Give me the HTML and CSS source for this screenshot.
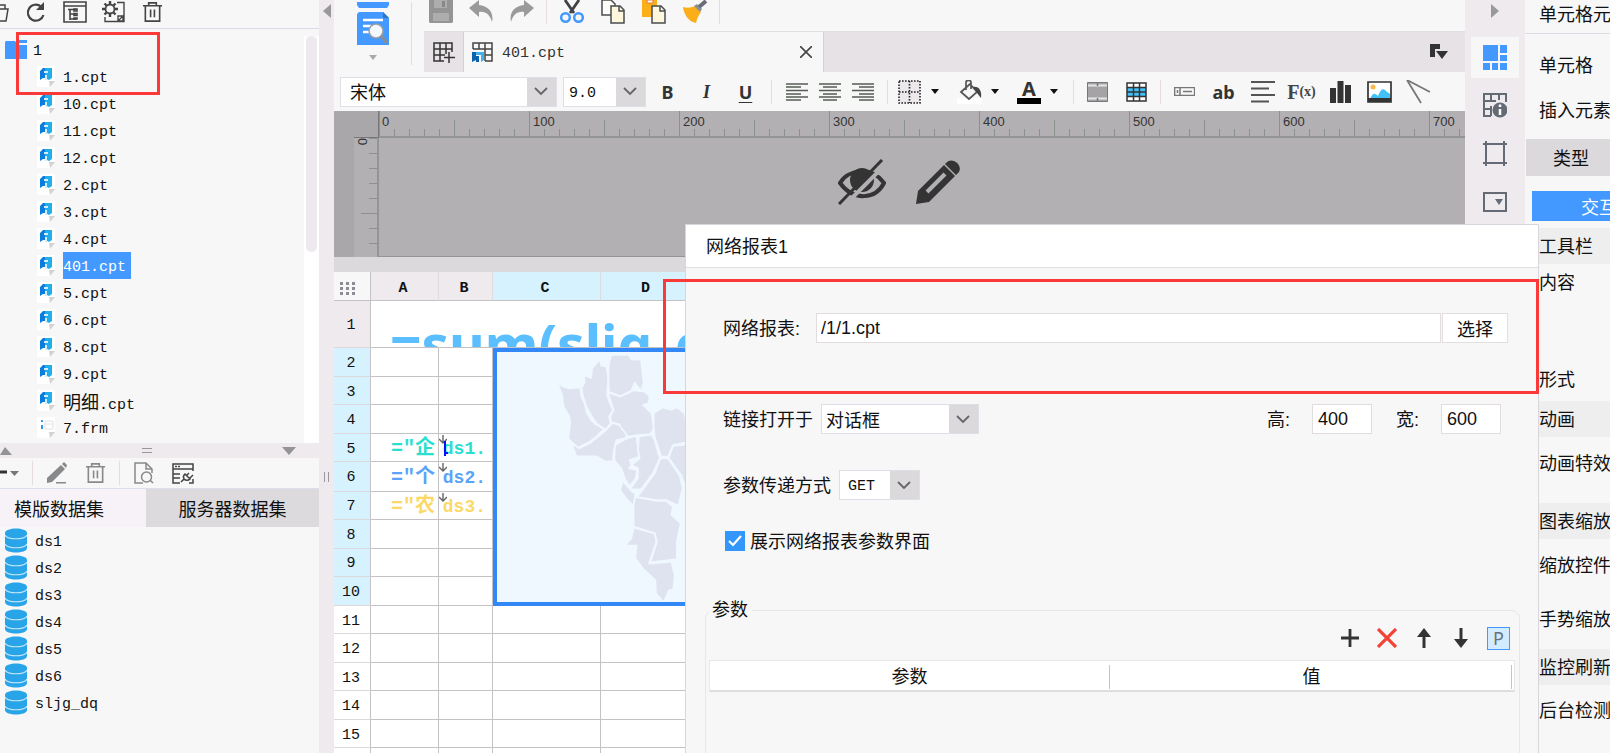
FILE: index.html
```html
<!DOCTYPE html>
<html lang="zh-CN">
<head>
<meta charset="utf-8">
<title>401.cpt</title>
<link rel="stylesheet" href="styles.css">
</head>
<body>
<svg class="defs" aria-hidden="true">
  <symbol id="file" viewBox="0 0 19 21"><path d="M0 0h18v14l-5 7H0z" fill="#fff"/><path d="M12 15h6l-5 6z" fill="#d2d2d2"/><path d="M3 5l3-3h3v10H6l-3 2z" fill="#0a7ddc"/><path d="M8 2h7v10l-3 2-4-2z" fill="#23aeea"/><path d="M7 5h4v2H7zM8 9h2v5H8z" fill="#d4edfa"/></symbol>
  <symbol id="form" viewBox="0 0 19 21"><path d="M0 0h18v14l-5 7H0z" fill="#fff"/><path d="M12 15h6l-5 6z" fill="#d2d2d2"/><path d="M8 4h8v8H8zM8 7h8" fill="none" stroke="#e6e0e4"/><path d="M4 3h2v2H4zM4 8h2v4H4z" fill="#2b9fe8"/></symbol>
  <symbol id="db" viewBox="0 0 22 25"><path d="M0 5C0-1 22-1 22 5v15c0 6-22 6-22 0z" fill="#28a4e9"/><path d="M0 7c2 5 20 5 22 0M0 16c2 5 20 5 22 0" fill="none" stroke="#c5e6f9" stroke-width="1.200"/></symbol>
  <symbol id="trash" viewBox="0 0 22 22"><path d="M1 4.500h20M7 4V1.500h8V4M3.500 4.500v16h15v-16M9 8.500v8M13 8.500v8" fill="none" stroke="currentColor" stroke-width="1.700"/></symbol>
  <symbol id="chev" viewBox="0 0 14 9"><path d="M1 1l6 6 6-6" fill="none" stroke="#66666a" stroke-width="1.800"/></symbol>
  <symbol id="tri" viewBox="0 0 8 5"><path d="M0 0h8L4 5z" fill="currentColor"/></symbol>
  <symbol id="into" viewBox="0 0 8 9"><path d="M4 0v8M0 4l4 4 4-4" fill="none" stroke="#666" stroke-width="1.400"/></symbol>
</svg>

<div class="app">
  <aside class="left">
    <div class="bar files-bar">
      <button class="tool cut" aria-label="打开"><svg width="9" height="22" viewBox="0 0 9 22"><path d="M0 4h5v4M0 8h8l-2 12H0" fill="none" stroke="#444" stroke-width="1.500"/></svg></button>
      <button class="tool" aria-label="刷新"><svg width="21" height="22" viewBox="0 0 21 22"><path d="M16 5.500A8 8 0 1 0 18.500 14" fill="none" stroke="#444" stroke-width="2.200"/><path d="M19 1v8h-8z" fill="#444"/></svg></button>
      <button class="tool" aria-label="目录"><svg width="24" height="22" viewBox="0 0 24 22" fill="none" stroke="#444" stroke-width="1.600"><path d="M1 1h22v20H1zM1 5h22M5 8.500h8M7 9v10M7 13h6M7 18h6"/><path d="M11 8h3v2h-3zM11 12.500h3v2h-3zM11 17h3v1h-3z"/></svg></button>
      <button class="tool" aria-label="设置"><svg width="23" height="22" viewBox="0 0 23 22" fill="none" stroke="#444" stroke-width="1.800"><circle cx="8" cy="8" r="4.500"/><path d="M8 0v3M8 13v3M0 8h3M13 8h3M2.500 2.500l2 2M11.500 11.500l2 2M13.500 2.500l-2 2M4.500 11.500l-2 2" stroke-width="2.400"/><path d="M15 1.500h7v19H3V16M16 20l6-6M16 15h5v5h-5z" stroke-width="1.400"/></svg></button>
      <button class="tool dark" aria-label="删除"><svg width="21" height="22"><use href="#trash"/></svg></button>
    </div>
    <div class="tree-pane">
      <ul class="tree">
        <li class="root"><svg width="22" height="19" viewBox="0 0 22 19"><path d="M1 1h9l3 4h9v14H0V2z" fill="#4399ff"/><path d="M12 0h10v3h-8z" fill="#4399ff"/></svg><span>1</span></li>
        <li><svg><use href="#file"/></svg><span>1.cpt</span></li>
        <li><svg><use href="#file"/></svg><span>10.cpt</span></li>
        <li><svg><use href="#file"/></svg><span>11.cpt</span></li>
        <li><svg><use href="#file"/></svg><span>12.cpt</span></li>
        <li><svg><use href="#file"/></svg><span>2.cpt</span></li>
        <li><svg><use href="#file"/></svg><span>3.cpt</span></li>
        <li><svg><use href="#file"/></svg><span>4.cpt</span></li>
        <li class="on"><svg><use href="#file"/></svg><span>401.cpt</span></li>
        <li><svg><use href="#file"/></svg><span>5.cpt</span></li>
        <li><svg><use href="#file"/></svg><span>6.cpt</span></li>
        <li><svg><use href="#file"/></svg><span>8.cpt</span></li>
        <li><svg><use href="#file"/></svg><span>9.cpt</span></li>
        <li><svg><use href="#file"/></svg><span><b class="cjk">明细</b>.cpt</span></li>
        <li><svg><use href="#form"/></svg><span>7.frm</span></li>
      </ul>
      <div class="scroll"><i></i></div>
      <div class="mark mark-file"></div>
    </div>
    <div class="splitter">
      <svg width="12" height="8" viewBox="0 0 12 8"><path d="M0 8h12L5 0z" fill="#949494"/></svg>
      <svg width="10" height="5" viewBox="0 0 10 5"><path d="M0 .5h10M0 4.500h10" stroke="#99979b"/></svg>
      <svg width="14" height="8" viewBox="0 0 14 8"><path d="M0 0h14L7 8z" fill="#949494"/></svg>
    </div>
    <div class="bar data-bar">
      <button class="tool add" aria-label="添加数据集"><svg width="20" height="8" viewBox="0 0 20 8"><path d="M0 3h7" stroke="#333" stroke-width="3"/><path d="M10 2h9l-4.500 5z" fill="#777"/></svg></button>
      <i class="sep"></i>
      <button class="tool grey" aria-label="编辑"><svg width="22" height="22" viewBox="0 0 22 22"><path d="M1 16L15 3l4 4L6 20l-5 1zM16 2l2-2 3 3-1 3zM10 20h10v1.500H10z" fill="currentColor"/></svg></button>
      <button class="tool grey" aria-label="删除数据集"><svg width="21" height="22"><use href="#trash"/></svg></button>
      <i class="sep"></i>
      <button class="tool grey" aria-label="预览数据"><svg width="20" height="22" viewBox="0 0 20 22" fill="none" stroke="currentColor" stroke-width="1.500"><path d="M9 21H1V1h11l6 6v4M12 1v6h6"/><circle cx="12.500" cy="15" r="5"/><path d="M16 18l3 3"/></svg></button>
      <button class="tool dark" aria-label="连接"><svg width="22" height="21" viewBox="0 0 22 21" fill="none" stroke="currentColor" stroke-width="1.500"><path d="M8 20H1V1h20v7M1 6h20M1 11h7M1 15h7M3 3.500h2M6 3.500h2"/><path d="M9 19l3-3a4 4 0 0 1 1-5l5 5a4 4 0 0 1-6 0M15 12l2-2M18 15l3-3M17 20h4v-4" /></svg></button>
    </div>
    <div class="tabs">
      <button class="tab on">模版数据集</button><button class="tab">服务器数据集</button>
    </div>
    <ul class="sets">
      <li><svg><use href="#db"/></svg><span>ds1</span></li>
      <li><svg><use href="#db"/></svg><span>ds2</span></li>
      <li><svg><use href="#db"/></svg><span>ds3</span></li>
      <li><svg><use href="#db"/></svg><span>ds4</span></li>
      <li><svg><use href="#db"/></svg><span>ds5</span></li>
      <li><svg><use href="#db"/></svg><span>ds6</span></li>
      <li><svg><use href="#db"/></svg><span>sljg_dq</span></li>
    </ul>
  </aside>

  <div class="gutter">
    <svg width="8" height="14" viewBox="0 0 8 14"><path d="M8 0v14L0 7z" fill="#99999b"/></svg>
    <svg width="5" height="10" viewBox="0 0 5 10"><path d="M.5 0v10M4.500 0v10" stroke="#99979b"/></svg>
  </div>

  <main class="center">
    <div class="top">
      <button class="preview" aria-label="预览">
        <svg width="32" height="43" viewBox="0 0 32 43"><path d="M0 0h32v3l-2 3H2L0 3z" fill="#4399ff"/><path d="M2 10h24l6 6v27H0V12z" fill="#4399ff"/><path d="M26 10l6 6h-6z" fill="#2d74c4"/><path d="M6 18h20M6 24h8M6 30h8" stroke="#fff" stroke-width="2.500"/><circle cx="19" cy="29" r="7" fill="#f2f8ff" stroke="#9a9da2" stroke-width="1.500"/><path d="M24 34l6 7" stroke="#8a8d92" stroke-width="3"/></svg>
        <svg width="8" height="5"><use href="#tri"/></svg>
      </button>
      <div class="top-main">
        <div class="quick">
          <button class="tool" aria-label="保存"><svg width="24" height="24" viewBox="0 0 24 24"><path d="M0 0h24v22l-1 1H1l-1-1z" fill="#949494"/><path d="M5 0h13v8H5zM4 13h16v8H4z" fill="#adadad"/><path d="M13 1h3v6h-3z" fill="#888"/></svg></button>
          <button class="tool" aria-label="撤销"><svg width="24" height="24" viewBox="0 0 24 24"><path d="M10 0L0 8l10 9v-5c7-1 11 3 13 10 2-9-3-16-13-17z" fill="#9a9a9a"/></svg></button>
          <button class="tool" aria-label="重做"><svg width="24" height="24" viewBox="0 0 24 24"><path d="M14 0l10 8-10 9v-5C7 11 3 15 1 22-1 13 4 6 14 5z" fill="#9a9a9a"/></svg></button>
          <i class="sep"></i>
          <button class="tool" aria-label="剪切"><svg width="24" height="24" viewBox="0 0 24 24" fill="none"><path d="M5 0l9 13M19 0l-9 13" stroke="#3e4145" stroke-width="2.800"/><circle cx="5.500" cy="17.500" r="4.300" stroke="#4399ff" stroke-width="2.500"/><circle cx="18.500" cy="17.500" r="4.300" stroke="#4399ff" stroke-width="2.500"/></svg></button>
          <button class="tool" aria-label="复制"><svg width="24" height="24" viewBox="0 0 24 24" stroke="#494d52" stroke-width="1.500"><path d="M1 0h9l4 4v11H1z" fill="#fffdf8"/><path d="M10 6h9l4 4v13H10z" fill="#fff6de"/><path d="M18 6v5h5" fill="none"/></svg></button>
          <button class="tool" aria-label="粘贴"><svg width="24" height="24" viewBox="0 0 24 24"><path d="M0 0h15v17H0z" fill="#fbb018"/><path d="M5 0h6v3H5z" fill="#fff" stroke="#e9773c"/><path d="M10 6h9l4 4v13H10z" fill="#fff6de" stroke="#494d52" stroke-width="1.500"/><path d="M18 6v5h5" fill="none" stroke="#494d52" stroke-width="1.500"/></svg></button>
          <button class="tool" aria-label="格式刷"><svg width="24" height="24" viewBox="0 0 24 24"><path d="M0 7c4 1 8 1 12-1l6 6c-3 4-4 7-5 11C6 22 1 15 0 7z" fill="#fbae17"/><path d="M11 6l3-2 5 5-2 3z" fill="#8b8f97"/><path d="M16 7l7-6" stroke="#6a6e78" stroke-width="4"/></svg></button>
          <i class="sep"></i>
        </div>
        <div class="docs">
          <button class="newdoc" aria-label="新建"><svg width="22" height="21" viewBox="0 0 22 21" fill="none" stroke="#333" stroke-width="1.500"><path d="M11 19H1V1h18v9M1 7h18M1 13h11M7 1v18M13 1v11M16 10v11M11 15.500h11"/></svg></button>
          <div class="doc">
            <svg width="21" height="21" viewBox="0 0 21 21"><path d="M1 7V1h19v18h-7M1 7h19M13 13h7M7 1v6M13 1v18" fill="none" stroke="#444" stroke-width="1.500"/><path d="M0 10h4v4h3v6H4v-2l-4 2z" fill="#0c62ae"/><path d="M4 10h8v8l-3 2v-7H4z" fill="#41b1ee"/></svg>
            <span>401.cpt</span>
            <button class="close" aria-label="关闭"><svg width="12" height="12" viewBox="0 0 12 12"><path d="M0 0l12 12M12 0L0 12" stroke="#444" stroke-width="1.600"/></svg></button>
          </div>
          <button class="list" aria-label="文档列表"><svg width="18" height="16" viewBox="0 0 18 16"><path d="M0 0h10v5H5v8H0z" fill="#333"/><path d="M6 7h12l-6 8z" fill="#333"/></svg></button>
        </div>
      </div>
    </div>

    <div class="format">
      <div class="combo font"><select aria-label="字体"><option>宋体</option></select><svg><use href="#chev"/></svg></div>
      <div class="combo size"><select aria-label="字号"><option>9.0</option></select><svg><use href="#chev"/></svg></div>
      <button class="tool glyph">B</button>
      <button class="tool glyph it">I</button>
      <button class="tool glyph un">U</button>
      <i class="sep"></i>
      <button class="tool al" aria-label="左对齐"><svg width="22" height="18" viewBox="0 0 22 18"><path d="M0 1h22M0 4h15M0 7.500h22M0 11h15M0 14h22M0 17h15" stroke="#555c55" stroke-width="1.500"/></svg></button>
      <button class="tool al" aria-label="居中"><svg width="22" height="18" viewBox="0 0 22 18"><path d="M0 1h22M4 4h14M0 7.500h22M4 11h14M0 14h22M4 17h14" stroke="#555c55" stroke-width="1.500"/></svg></button>
      <button class="tool al" aria-label="右对齐"><svg width="22" height="18" viewBox="0 0 22 18"><path d="M0 1h22M7 4h15M0 7.500h22M7 11h15M0 14h22M7 17h15" stroke="#555c55" stroke-width="1.500"/></svg></button>
      <i class="sep wide"></i>
      <button class="tool split" aria-label="边框"><svg width="25" height="24" viewBox="0 0 25 24"><path d="M2 1h21v22H2zM12.500 1v22M2 12h21" fill="#ece8ec" stroke="#222" stroke-width="1.600" stroke-dasharray="1.600 1.400"/></svg><svg width="8" height="5"><use href="#tri"/></svg></button>
      <button class="tool split" aria-label="填充色"><svg width="25" height="24" viewBox="0 0 25 24"><path d="M0 18h25v6H0z" fill="#fff"/><path d="M4 12l9-8 7 8-8 7zM9 10V2c0-2 5-2 5 0v7" fill="none" stroke="#555" stroke-width="1.700"/><path d="M16 7c6-1 9 4 8 11l-4-5z" fill="#444"/></svg><svg width="8" height="5"><use href="#tri"/></svg></button>
      <button class="tool split" aria-label="字体颜色"><span class="fore">A</span><svg width="8" height="5"><use href="#tri"/></svg></button>
      <i class="sep"></i>
      <button class="tool" aria-label="合并"><svg width="21" height="20" viewBox="0 0 21 20"><path d="M.5 .5h20v19H.5z" fill="#a5a3a6" stroke="#777"/><path d="M1 3.500h19M1 16.500h19" stroke="#e5e5e5" stroke-width="2"/><path d="M10.500 0v4M10.500 16v4" stroke="#777" stroke-width="1.500"/></svg></button>
      <button class="tool" aria-label="取消合并"><svg width="21" height="20" viewBox="0 0 21 20"><path d="M1 1h19v18H1z" fill="#fff"/><path d="M1 6h19v8H1z" fill="#41c1f7"/><path d="M1 1h19v18H1zM1 5.500h19M1 10h19M1 14.500h19M7.500 1v18M13.500 1v18" fill="none" stroke="#333" stroke-width="1.500"/></svg></button>
      <i class="sep"></i>
      <button class="tool" aria-label="按钮控件"><svg width="21" height="9" viewBox="0 0 21 9" fill="none" stroke="#777" stroke-width="1.500"><path d="M.6 .6h20v7.800H.6zM6 .6v8M3.500 3v3M9 4.500h9"/></svg></button>
      <button class="tool glyph">ab</button>
      <button class="tool" aria-label="段落"><svg width="24" height="22" viewBox="0 0 24 22"><path d="M0 1h24M0 7.500h18M0 14h24M0 20.500h18" stroke="#555" stroke-width="2"/></svg></button>
      <button class="tool fx" aria-label="公式">F<small>(x)</small></button>
      <button class="tool" aria-label="图表"><svg width="21" height="22" viewBox="0 0 21 22"><path d="M0 7h6v15H0zM7.500 0h6v22h-6zM15 4h6v18h-6z" fill="#333"/></svg></button>
      <button class="tool" aria-label="图片"><svg width="25" height="22" viewBox="0 0 25 22"><path d="M1 1h23v20H1z" fill="#fff" stroke="#333" stroke-width="1.700"/><path d="M3 18c3-7 5-6 8-3 3-8 6-8 8-5l4 3v5z" fill="#41c1f7"/><path d="M1 17h23v4H1z" fill="#333"/><circle cx="6" cy="6" r="2.500" fill="#fbb94a"/></svg></button>
      <button class="tool" aria-label="斜线"><svg width="25" height="24" viewBox="0 0 25 24"><path d="M1 0l23 12M1 0l14 23" stroke="#777" stroke-width="1.800"/></svg></button>
    </div>

    <div class="stage">
      <div class="corner"></div>
      <div class="ruler-x"><span>0</span><span>100</span><span>200</span><span>300</span><span>400</span><span>500</span><span>600</span><span>700</span></div>
      <div class="ruler-y"><span>0</span></div>
      <div class="paper">
        <svg width="48" height="46" viewBox="0 0 48 46"><path d="M2 24C10 10 34 7 46 24C38 40 16 43 2 24z" fill="none" stroke="#343434" stroke-width="4"/><circle cx="24" cy="21" r="12" fill="#343434"/><path d="M5 48L49 4" stroke="#b2b0b3" stroke-width="4"/><path d="M1 45L44 1" stroke="#343434" stroke-width="3"/></svg>
        <svg width="46" height="46" viewBox="0 0 46 46"><path d="M1 45l2-13L29 6l11 11-26 26z" fill="#343434"/><path d="M31 4c6-7 17 2 13 9l-3 3L30 5z" fill="#343434"/><path d="M12 33l18-18" stroke="#b2b0b3" stroke-width="4"/></svg>
      </div>
    </div>

    <table class="grid">
      <colgroup><col class="c-h"><col class="c-a"><col class="c-b"><col class="c-c"><col class="c-d"><col></colgroup>
      <thead><tr><td class="all"><svg width="16" height="13" viewBox="0 0 16 13"><path d="M0 1.500h3M6 1.500h3M12 1.500h3M0 6.500h3M6 6.500h3M12 6.500h3M0 11.500h3M6 11.500h3M12 11.500h3" stroke="#8e8b96" stroke-width="3"/></svg></td><th>A</th><th>B</th><th class="on">C</th><th class="on">D</th><th class="on">E</th></tr></thead>
      <tbody>
        <tr class="r1"><th>1</th><td colspan="5"><div class="total">=sum(sljg_dq)</div></td></tr>
        <tr class="on r2"><th>2</th><td></td><td></td><td colspan="3" rowspan="9" class="map">
          <svg width="193" height="250" viewBox="502 31 579 750"><g fill="#dfe3ef" stroke="#eff7ff" stroke-width="5" stroke-linejoin="round">
            <path d="M683 120l17 15 20 5 32-3 3 28 10 20 7 30 13 20 12 12 26 15-23 23-20 15-35 18-20-18-9-10 6-50-4-18-16-27-5-35z"/>
            <path d="M810 53l5 19 15 3 6 35-4 50 11 30 7 15-12 20 5 20-15 19-28-19-13-20-17-30-8-25-7-30 10-17 -2-22 22 8 2-27z"/>
            <path d="M845 40l53 0 7 13 29 1 8 71-8 22-19-24-10 24-33 17-34-14-2-50 2-35z"/>
            <path d="M834 152l38 13 40-19 33 4 15 15-3 20-17 5 26 25 6 45-10 17-37 3-30 5-23-23-2-14-25-6-3-17 10-20z"/>
            <path d="M828 267l20-23 20 6 22 28-2 12-28 5-8 35-2 28-25 1-25-15-60 0-14-38 22 14 32-15z"/>
            <path d="M892 290l28-8 5 38 3 25-28 10 5 15-7 10 24 5-4 25-18 24-15-24-10-30-21-24 2-46z"/>
            <path d="M928 284l37-5 10 16 15 55-20 45-35 47-34 1 24-33 0-30-20-10 25-20-5-25z"/>
            <path d="M972 215l28-18 25 8 17-8 23 18 15 85-50 10-15 35-20 0-20-60-3-30z"/>
            <path d="M1030 313l50-5 0 112-15 12-10-32-38-50z"/>
            <path d="M992 350l23 0 35 52 9 38-13 52-36-17-30 0-57-9 17-23 35-48z"/>
            <path d="M880 418l25 30 12 8-4 38-24-24-18-25z"/>
            <path d="M916 466l64 12 30 0 20 17-5 25 28 25-12 55 1 52-80 10 20-62-7-25-30-10-33-10 0-65z"/>
            <path d="M912 558l63 17 5 25-22 65 17 0 50-5 10 40-4 43-13 3-16 36-23-27-2-40-38-35-22-30 4-38-36 0 20-22z"/>
          </g></svg></td></tr>
        <tr class="on"><th>3</th><td></td><td></td></tr>
        <tr class="on"><th>4</th><td></td><td></td></tr>
        <tr class="on teal"><th>5</th><td class="fn">=″企</td><td class="ds"><svg><use href="#into"/></svg><svg class="caret" viewBox="0 0 5 16"><path d="M2 0v15M2 12h3" stroke="#0010ff" stroke-width="2"/></svg>ds1.</td></tr>
        <tr class="on blue"><th>6</th><td class="fn">=″个</td><td class="ds"><svg><use href="#into"/></svg>ds2.</td></tr>
        <tr class="on gold"><th>7</th><td class="fn">=″农</td><td class="ds"><svg><use href="#into"/></svg>ds3.</td></tr>
        <tr class="on"><th>8</th><td></td><td></td></tr>
        <tr class="on"><th>9</th><td></td><td></td></tr>
        <tr class="on"><th>10</th><td></td><td></td></tr>
        <tr><th>11</th><td></td><td></td><td></td><td></td><td></td></tr>
        <tr><th>12</th><td></td><td></td><td></td><td></td><td></td></tr>
        <tr><th>13</th><td></td><td></td><td></td><td></td><td></td></tr>
        <tr><th>14</th><td></td><td></td><td></td><td></td><td></td></tr>
        <tr><th>15</th><td></td><td></td><td></td><td></td><td></td></tr>
        <tr><th></th><td></td><td></td><td></td><td></td><td></td></tr>
      </tbody>
    </table>
  </main>

  <nav class="strip">
    <svg class="fold" width="8" height="14" viewBox="0 0 8 14"><path d="M0 0v14l8-7z" fill="#99999b"/></svg>
    <button class="on" aria-label="单元格元素"><svg width="24" height="25" viewBox="0 0 24 25" fill="#4399ff"><path d="M0 0h15v16H0zM17 0h7v8h-7zM17 10h7v6h-7zM0 18h7v7H0zM9 18h6v7H9zM17 18h7v7h-7z"/></svg></button>
    <button aria-label="单元格属性"><svg width="24" height="25" viewBox="0 0 24 25"><path d="M8 23H1V1h22v8M1 8h12M1 16h8M8 1v6M16 1v6M8 13v10" fill="none" stroke="#646b75" stroke-width="2"/><circle cx="17" cy="17" r="7.500" fill="#646b75"/><path d="M17 11.500v2.500M17 16v6" stroke="#fff" stroke-width="2.500"/></svg></button>
    <button aria-label="悬浮元素"><svg width="24" height="25" viewBox="0 0 24 25"><path d="M3 0v25M21 0v25M0 3h24M0 22h24" stroke="#646b75" stroke-width="2"/></svg></button>
    <button aria-label="控件设置"><svg width="24" height="20" viewBox="0 0 24 20"><path d="M1 1h22v18H1z" fill="none" stroke="#646b75" stroke-width="2"/><path d="M12 7h8l-4 6z" fill="#646b75"/></svg></button>
  </nav>

  <aside class="props">
    <h2>单元格元素</h2>
    <p class="p1">单元格</p>
    <p class="p2">插入元素</p>
    <button class="kind">类型</button>
    <button class="act">交互</button>
    <h3>工具栏</h3>
    <p>内容</p>
    <p class="p4">形式</p>
    <h3>动画</h3>
    <p class="p5">动画特效</p>
    <h3>图表缩放</h3>
    <p class="p6">缩放控件</p>
    <p class="p7">手势缩放</p>
    <h3>监控刷新</h3>
    <p class="p8">后台检测</p>
  </aside>

  <section class="dialog" role="dialog" aria-labelledby="dlg">
    <h1 id="dlg">网络报表1</h1>
    <div class="mark mark-path"></div>
    <form>
      <div class="row path"><label for="rp">网络报表:</label><input id="rp" type="text" value="/1/1.cpt"><button type="button">选择</button></div>
      <div class="row open"><label for="op">链接打开于</label><div class="combo open-in"><select id="op"><option>对话框</option></select><svg><use href="#chev"/></svg></div>
        <label class="push" for="hh">高:</label><input id="hh" type="text" value="400"><label for="ww">宽:</label><input id="ww" type="text" value="600"></div>
      <div class="row way"><label for="mt">参数传递方式</label><div class="combo method"><select id="mt"><option>GET</option></select><svg><use href="#chev"/></svg></div></div>
      <div class="row show"><span class="tick"><input type="checkbox" id="sh" checked><svg width="14" height="12" viewBox="0 0 14 12"><path d="M1 6l4 4 8-9" fill="none" stroke="#fff" stroke-width="2.200"/></svg></span><label for="sh">展示网络报表参数界面</label></div>
      <fieldset>
        <legend>参数</legend>
        <div class="ops">
          <button type="button" aria-label="添加"><svg width="18" height="18" viewBox="0 0 18 18"><path d="M9 0v18M0 9h18" stroke="#333" stroke-width="2.800"/></svg></button>
          <button type="button" aria-label="删除"><svg width="20" height="20" viewBox="0 0 20 20"><path d="M1 1l18 18M19 1L1 19" stroke="#f44336" stroke-width="3.200"/></svg></button>
          <button type="button" aria-label="上移"><svg width="14" height="20" viewBox="0 0 14 20"><path d="M7 20V4" stroke="#333" stroke-width="3"/><path d="M7 0l7 9H0z" fill="#333"/></svg></button>
          <button type="button" aria-label="下移"><svg width="14" height="20" viewBox="0 0 14 20"><path d="M7 0v16" stroke="#333" stroke-width="3"/><path d="M7 20l7-9H0z" fill="#333"/></svg></button>
          <button type="button" class="pp">P</button>
        </div>
        <table class="params"><thead><tr><th><span>参数</span></th><th><span>值</span></th></tr></thead></table>
      </fieldset>
    </form>
  </section>
</div>
</body>
</html>
```
FILE: styles.css
```css
* { box-sizing: border-box; }
body, ul, h1, h2, h3, p, fieldset, legend { margin: 0; padding: 0; }
body {
  overflow: hidden;
  background: #f7f7f7;
  color: #111;
  font: 18px/24px "Liberation Sans", "Noto Sans CJK SC", sans-serif;
}
ul { list-style: none; }
button, input, select { font: inherit; color: inherit; }
button { border: 0; padding: 0; background: none; }
svg { display: block; flex: none; }
.defs { position: absolute; width: 0; height: 0; }

.app { position: relative; display: flex; height: 100vh; overflow: hidden; }

.bar, .quick, .format { display: flex; align-items: center; }
.tool { display: flex; flex: none; align-items: center; justify-content: center; width: 39px; }
.sep { flex: none; width: 1px; height: 24px; margin: 0 4px; background: #e4dcdf; }
.dark { color: #444; }
.grey { color: #88898b; }
.mark { position: absolute; border: 3px solid #fb3939; pointer-events: none; }

/* Left pane */
.left { display: flex; flex: 0 0 319px; flex-direction: column; }
.files-bar { height: 29px; padding-bottom: 4px; border-bottom: 1px solid #d9dbe7; }
.files-bar .cut { justify-content: flex-start; width: 16px; }
.tree-pane { position: relative; display: flex; flex: none; height: 414px; padding-top: 7px; }
.tree { flex: 1; }
.tree li { display: flex; align-items: center; gap: 7px; height: 27px; padding-left: 37px; font: 15px/24px "Liberation Mono", "Noto Sans CJK SC", monospace; }
.tree li svg { width: 19px; height: 21px; }
.tree .root { gap: 6px; padding-left: 5px; }
.tree .root svg { width: 22px; height: 19px; }
.tree span { height: 27px; padding: 4px 5px 0 0; }
.tree .on span { background: #4399ff; color: #fff; }
.tree .cjk { font: 18px/20px "Noto Sans CJK SC", sans-serif; }
.scroll { width: 15px; padding: 0 2px; background: #fff; }
.scroll i { display: block; height: 216px; border-radius: 5px; background: #ede9ee; }
.mark-file { top: 3px; left: 16px; width: 144px; height: 63px; }
.splitter { display: flex; flex: none; align-items: center; justify-content: space-between; height: 15px; padding-right: 23px; background: #eeeaee; }
.data-bar { flex: none; height: 31px; border-bottom: 1px solid #dcdfeb; }
.data-bar .add { justify-content: flex-start; width: 28px; }
.tabs { display: flex; flex: none; height: 38px; }
.tab { flex: 1; padding-top: 3px; background: #dcdadd; }
.tab.on { flex: 0 0 146px; padding-right: 28px; background: #f6f2f7; }
.sets li { display: flex; align-items: center; gap: 8px; height: 27px; padding-left: 5px; font: 15px/24px "Liberation Mono", monospace; }
.sets span { padding-top: 5px; }
.sets svg { width: 22px; height: 25px; }

.gutter { display: flex; flex: 0 0 15px; flex-direction: column; align-items: center; justify-content: flex-start; gap: 454px; padding-top: 4px; background: #eeeaee; }

/* Centre */
.center { display: flex; flex: 1; flex-direction: column; min-width: 0; }
.top { display: flex; flex: none; height: 72px; }
.preview { display: flex; flex: 0 0 78px; flex-direction: column; align-items: center; justify-content: flex-start; gap: 10px; margin: 2px 12px 7px 0; border-right: 1px solid #e4dcdf; color: #aaa; }
.top-main { flex: 1; min-width: 0; }
.quick { height: 32px; padding-bottom: 8px; border-bottom: 1px solid #e2dfe3; }
.quick .tool { width: 41px; }
.quick .tool:first-child { width: 34px; margin-right: 2px; }
.docs { display: flex; height: 40px; background: #e7e2e6; }
.newdoc { display: flex; align-items: center; justify-content: center; width: 40px; border-right: 1px solid #cfd3dd; }
.doc { display: flex; flex: 0 0 360px; align-items: center; gap: 9px; padding: 0 11px 0 8px; border-right: 1px solid #cfd3dd; background: #f7f7f7; color: #333; font: 15px/24px "Liberation Mono", monospace; }
.doc span { padding-top: 4px; }
.close, .list { margin-left: auto; }
.list { padding-right: 17px; }

.format { flex: none; height: 39px; padding-left: 6px; }
.combo { display: grid; grid-template-columns: 1fr 30px; align-items: center; height: 30px; border: 1px solid #dfdde6; background: linear-gradient(#dbd9dc, #dbd9dc) right / 29px 100% no-repeat #fff; }
.combo select { grid-area: 1 / 1 / 2 / 3; width: 100%; height: 28px; padding: 3px 30px 0 9px; border: 0; appearance: none; background: none; }
.combo svg { grid-area: 1 / 2; justify-self: center; width: 14px; height: 9px; pointer-events: none; }
.font { width: 217px; margin-right: 6px; }
.size { width: 83px; margin-right: 2px; }
.size select, .method select { padding-top: 4px; padding-left: 5px; font: 15px/24px "Liberation Mono", monospace; }
.glyph { color: #333; font: bold 18px/24px "Noto Sans", sans-serif; }
.it { font: italic bold 18px/24px "Liberation Serif", serif; }
.un { text-decoration: underline; text-underline-offset: 3px; }
.al { width: 33px; }
.un + .sep { margin: 0 8px 0 6px; }
.format .wide { margin: 0 8px; }
.split { justify-content: flex-start; gap: 9px; width: 60px; padding-left: 1px; }
.fore { width: 24px; border-bottom: 6px solid #000; color: #333; font: bold 20px/18px "Noto Sans", sans-serif; text-align: center; }
.split + .sep { margin-left: -3px; }
.fx { color: #444; font: bold 20px/24px "Liberation Serif", serif; }
.fx small { font-size: 14px; }

.stage { display: grid; flex: none; grid-template: 27px 119px / 45px 1fr; background: #b2b0b3; }
.corner { border-right: 1px solid #777; background: linear-gradient(#777, #777) right bottom / 24px 1px no-repeat #a9a7aa; }
.ruler-x { display: flex; overflow: hidden; border-bottom: 2px solid #929498; }
.ruler-x span {
  flex: 0 0 150px; padding: 0 4px; color: #333; font: 13px/21px "Liberation Sans", sans-serif;
  background:
    linear-gradient(#8b918b, #8b918b) 0 0 / 1px 100% no-repeat,
    linear-gradient(#8b918b, #8b918b) 75px bottom / 1px 16px no-repeat,
    repeating-linear-gradient(to right, #8b918b 0 1px, transparent 1px 15px) 0 bottom / 100% 7px no-repeat;
}
.ruler-x span:first-child { padding-left: 3px; }
.ruler-y {
  border-right: 2px solid #929498; border-left: 20px solid #a9a7aa; color: #333;
  background:
    linear-gradient(#8b918b, #8b918b) right 75px / 16px 1px no-repeat,
    repeating-linear-gradient(#8b918b 0 1px, transparent 1px 15px) right 0 / 8px 100% no-repeat;
}
.ruler-y span { display: block; width: 16px; font: 13px/16px "Liberation Sans", sans-serif; writing-mode: vertical-rl; }
.paper { display: flex; align-items: flex-start; justify-content: center; gap: 29px; padding: 21px 46px 0 0; border-bottom: 1px solid #929498; }

.grid { flex: none; width: 100%; border-top: 15px solid #dbd9dc; border-collapse: separate; border-spacing: 0; table-layout: fixed; background: #fff; font: 15px/20px "Liberation Mono", monospace; }
.grid th, .grid td { height: 28px; padding: 0; border: 0 solid #c4c2c4; border-width: 0 1px 1px 0; }
.grid tr:nth-child(even) th, .grid tr:nth-child(even) td { height: 29px; }
.grid thead th, .grid thead .all { height: 29px; }
.c-h { width: 37px; }
.c-a { width: 68px; }
.c-b { width: 54px; }
.c-c { width: 108px; }
.c-d { width: 93px; }
.grid th { padding: 4px 2px 0 0; font-weight: 400; text-align: center; }
.grid thead th { padding: 6px 3px 0 0; border-right-color: #ddd; background: #eeeaee; font-weight: 700; }
.grid thead .on, .grid .on th { background: #d6f2ff; }
.grid .all { background: #f7f7f7; }
.all svg { margin: 4px auto 0 6px; }
.grid tbody th { border-bottom-color: #dcd8dc; color: #111; }
.grid .r1 th { background: #eeeaee; }
.grid .r1 th, .grid .r1 td { height: 47px; }
.grid .r2 th, .grid .r2 td { height: 30px; }
.total { height: 46px; padding-left: 19px; overflow: hidden; color: #5bbfff; font: bold 55px/86px "Noto Sans", sans-serif; }
.grid .map { padding: 0; border: 4px solid #3388f8; background: #eff7ff; vertical-align: top; }
.teal { color: #2adfd0; }
.blue { color: #5aa3f7; }
.gold { color: #fcd966; }
.grid .fn, .grid .ds { position: relative; padding: 3px 6px 0 0; font: bold 18px/20px "Liberation Mono", monospace; text-align: right; white-space: nowrap; }
.grid .fn { padding-right: 3px; font: bold 20px/20px "Liberation Mono", "Noto Sans CJK SC", monospace; }
.ds svg { position: absolute; top: 1px; left: 0; width: 8px; height: 9px; }
.ds .caret { top: 7px; left: 4px; width: 5px; height: 16px; }

/* Right strip */
.strip { display: flex; flex: 0 0 60px; flex-direction: column; align-items: center; gap: 7px; padding-top: 4px; background: #eeeaee; }
.strip .fold { margin-bottom: 12px; }
.strip button { display: flex; align-items: center; justify-content: center; width: 48px; height: 41px; }
.strip .on { background: #f7f7f7; }

/* Property panel */
.props { flex: 0 0 85px; overflow: hidden; white-space: nowrap; }
.props h2 { height: 34px; padding: 3px 0 0 14px; border-bottom: 1px solid #dcdae2; font: inherit; }
.props p, .props h3 { height: 36px; padding-left: 14px; font: 18px/39px "Liberation Sans", "Noto Sans CJK SC", sans-serif; }
.props h3 { background: #eee; }
.props .p1 { margin-top: 13px; }
.props .p2 { margin-top: 9px; }
.kind { display: block; width: 100%; height: 37px; margin: 11px 0 15px 1px; padding: 2px 0 0 27px; background: #dbd9dc; text-align: left; }
.act { display: block; width: 100%; height: 30px; margin: 0 0 7px 7px; padding: 3px 0 0 49px; background: #4399ff; color: #fff; text-align: left; }
.props .p4 { margin: 61px 0 4px; }
.props .p5 { margin: 8px 0 22px; }
.props .p6 { margin: 8px 0 18px; }
.props .p7 { margin: 0 0 12px; }
.props .p8 { margin-top: 7px; }

/* Dialog */
.dialog { position: absolute; top: 224px; right: 71px; bottom: 0; left: 685px; border: 1px solid #d8d5dc; border-bottom: 0; background: #f7f7f7; }
.dialog h1 { height: 43px; padding-left: 20px; border-bottom: 1px solid #dde1e6; background: #fff; font: 18px/45px "Liberation Sans", "Noto Sans CJK SC", sans-serif; }
.mark-path { top: 54px; right: -1px; left: -23px; height: 115px; }
.dialog form { display: flex; flex-direction: column; padding: 45px 18px 0 19px; }
.row { display: flex; align-items: center; height: 30px; padding-left: 18px; }
.row label { padding-top: 2px; }
.row input[type=text] { height: 30px; padding: 0 4px; border: 1px solid #e2dcdf; background: #fff; }
.path { padding-right: 12px; }
.path label { width: 93px; }
.path input { flex: 1; min-width: 0; }
.path button { width: 66px; height: 30px; margin-left: 1px; padding-top: 3px; border: 1px solid #e2dfe3; background: #fff; }
.open { margin-top: 61px; padding-right: 19px; }
.open-in { width: 158px; margin-left: 8px; }
.open-in select { padding-left: 4px; }
.push { margin-left: auto; }
.open input[type=text] { width: 60px; margin-left: 22px; padding: 0 5px; }
.open input + label { margin-left: 24px; }
.way { margin-top: 36px; }
.method { width: 81px; margin-left: 8px; }
.method select { padding-left: 8px; }
.show { gap: 5px; margin-top: 26px; padding-left: 20px; }
.tick { display: grid; place-items: center; width: 20px; height: 20px; background: #3396fb; }
.tick input { grid-area: 1 / 1; width: 20px; height: 20px; margin: 0; appearance: none; }
.tick svg { grid-area: 1 / 1; pointer-events: none; }
.dialog fieldset { min-width: 0; height: 190px; margin-top: 42px; padding: 0 4px 0 3px; border: 1px solid #ebe5ea; border-radius: 8px; }
.dialog legend { padding: 0 4px 0 3px; line-height: 24px; }
.ops { display: flex; align-items: center; justify-content: flex-end; height: 38px; padding: 0 5px 6px 0; }
.ops button { display: flex; align-items: center; justify-content: center; width: 37px; height: 23px; }
.ops .pp { width: 23px; margin-left: 8px; border: 1px solid #4399ff; background: #d3ebff; color: #66727e; font: 18px/20px "Noto Sans", sans-serif; }
.params { width: 100%; border: 1px solid #ece6ea; border-bottom: 0; border-spacing: 0; table-layout: fixed; }
.params th { height: 31px; padding: 3px 2px 0 0; border-bottom: 2px solid #dedede; background: #fff; font-weight: 400; }
.params span { display: block; border-right: 1px solid #c9c5bb; line-height: 24px; }
```
